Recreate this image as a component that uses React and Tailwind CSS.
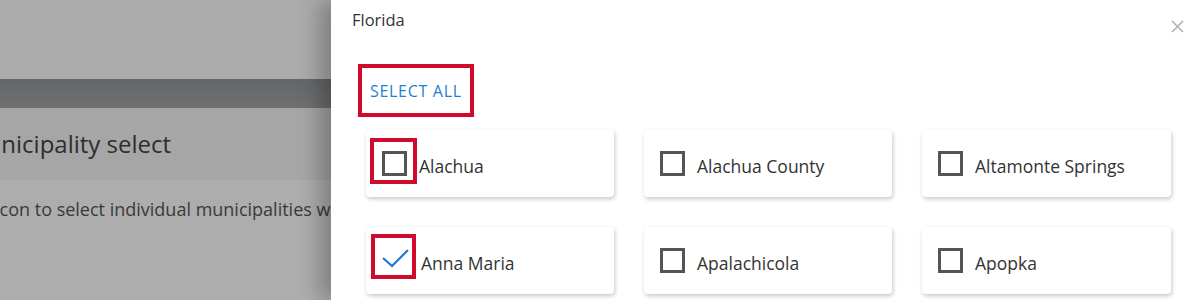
const places = [
  { name: 'Alachua', checked: false, mark: true },
  { name: 'Alachua County', checked: false },
  { name: 'Altamonte Springs', checked: false },
  { name: 'Anna Maria', checked: true, mark: true },
  { name: 'Apalachicola', checked: false },
  { name: 'Apopka', checked: false },
];

function Check({ checked }) {
  if (checked) {
    return (
      <svg width="27" height="25" viewBox="0 0 27 25" className="shrink-0">
        <polyline points="1,10 10,18 26,2" fill="none" stroke="#1f78d1" strokeWidth="2.2" />
      </svg>
    );
  }
  return <span className="block w-[25px] h-[25px] border-[3px] border-[#555555] shrink-0" />;
}

export default function App() {
  return (
    <div className="flex w-[1200px] h-[300px] overflow-hidden font-['Open_Sans',sans-serif]">
      {/* Dimmed page behind the drawer */}
      <div className="w-[331px] shrink-0 flex flex-col bg-[#adadad] overflow-hidden">
        <div className="h-[79px] bg-[#acacac]" />
        <div className="h-[29px] bg-gradient-to-b from-[#656668] to-[#6f7072]" />
        <div className="h-[72px] bg-[#a6a6a6] flex items-center">
          <span className="text-[24px] text-[#2e2e2e] whitespace-nowrap -ml-[35px]">Municipality select</span>
        </div>
        <div className="pt-[16px]">
          <span className="text-[18px] text-[#3a3a3a] whitespace-nowrap -ml-[5px] block">
            icon to select individual municipalities within
          </span>
        </div>
      </div>

      {/* Drawer */}
      <div className="relative flex-1 bg-white shadow-[-12px_0_20px_rgba(0,0,0,0.25)] pl-[35px]">
        <div className="flex items-start justify-between pt-[8px] -ml-[14px] pr-[16px]">
          <span className="text-[16.5px] text-[#333333]">Florida</span>
          <svg width="13" height="13" viewBox="0 0 13 13" className="mt-[12px]">
            <path d="M1 1L12 12M12 1L1 12" stroke="#b0b0b0" strokeWidth="1.6" />
          </svg>
        </div>

        <div className="mt-[31px] -ml-[8px] w-[116px] h-[53px] border-[4px] border-[#cf0a2c] flex items-center pl-[8px]">
          <span className="text-[16px] text-[#1f7fd6] tracking-[0.7px]">SELECT ALL</span>
        </div>

        <div className="grid grid-cols-[248px_248px_249px] gap-x-[30px] gap-y-[30px] mt-[13px]">
          {places.map((p) => (
            <div
              key={p.name}
              className="relative h-[67px] rounded-[4px] bg-white shadow-[1px_2px_4px_rgba(0,0,0,0.22)] flex items-center pl-[16px] gap-[12px]"
            >
              <Check checked={p.checked} />
              <span className="text-[17.5px] text-[#333333] mt-[5px]">{p.name}</span>
              {p.mark && (
                <span
                  className={
                    p.checked
                      ? 'absolute left-[5px] top-[7px] w-[45px] h-[45px] border-[4px] border-[#cf0a2c]'
                      : 'absolute left-[4px] top-[8px] w-[47px] h-[46px] border-[4px] border-[#cf0a2c]'
                  }
                />
              )}
            </div>
          ))}
        </div>
      </div>
    </div>
  );
}
